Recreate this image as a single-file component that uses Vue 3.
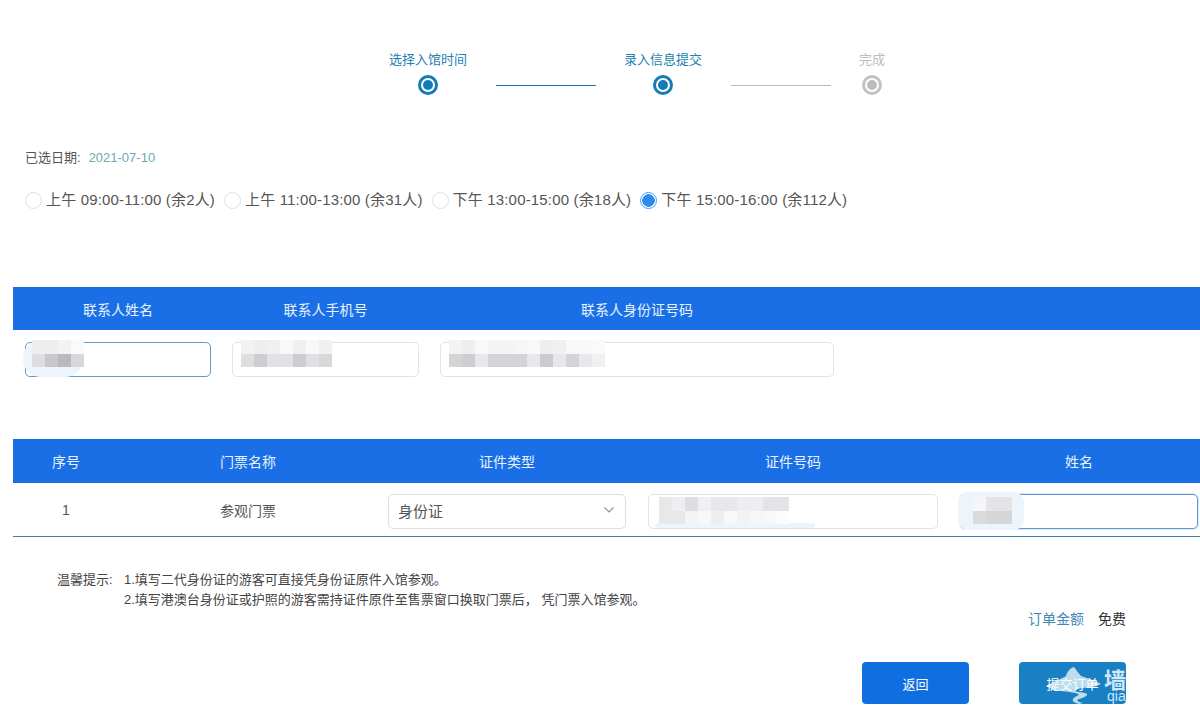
<script setup>
const steps = [
  { label: '选择入馆时间', state: 'on' },
  { label: '录入信息提交', state: 'on' },
  { label: '完成', state: 'off' },
]
const slots = [
  { text: '上午 09:00-11:00 (余2人)', checked: false },
  { text: '上午 11:00-13:00 (余31人)', checked: false },
  { text: '下午 13:00-15:00 (余18人)', checked: false },
  { text: '下午 15:00-16:00 (余112人)', checked: true },
]
const tone = (v) => `rgb(${v},${v},${v + 3})`
const mosaics = {
  name: [[238, 238, 243, 250], [222, 200, 186, 216]],
  phone: [[242, 238, 240, 248, 240, 248, 240], [222, 206, 226, 226, 205, 224, 216]],
  id: [[243, 238, 248, 244, 244, 246, 248, 238, 240, 248, 248, 250], [212, 206, 232, 212, 212, 212, 232, 204, 232, 212, 232, 240]],
  cert: [[232, 238, 222, 240, 232, 232, 238, 238, 228, 228], [232, 232, 244, 248, 238, 248, 242, 246, 248, 252]],
  person: [[246, 228, 228], [218, 214, 214]],
}
</script>

<template>
  <div class="page">
    <div class="steps">
      <template v-for="(s, i) in steps" :key="s.label">
        <div class="step" :class="s.state">
          <span class="step-label">{{ s.label }}</span>
          <span class="dot"><i></i></span>
        </div>
        <span v-if="i < 2" class="step-line" :class="i === 0 ? 'on' : 'off'"></span>
      </template>
    </div>

    <div class="date"><span>已选日期:</span><span class="date-val">2021-07-10</span></div>

    <div class="slots">
      <label v-for="s in slots" :key="s.text" class="slot">
        <span class="radio" :class="{ checked: s.checked }"></span>
        <span>{{ s.text }}</span>
      </label>
    </div>

    <section class="contact">
      <div class="band band-a">
        <span class="c1">联系人姓名</span>
        <span class="c2">联系人手机号</span>
        <span class="c3">联系人身份证号码</span>
      </div>
      <div class="contact-row">
        <div class="field c1 focus-line">
          <div class="smear s-name"></div>
          <div class="mosaic m-name">
            <div v-for="(row, r) in mosaics.name" :key="r" class="m-row">
              <b v-for="(v, k) in row" :key="k" :style="{ background: tone(v) }"></b>
            </div>
          </div>
        </div>
        <div class="field c2">
          <div class="mosaic">
            <div v-for="(row, r) in mosaics.phone" :key="r" class="m-row">
              <b v-for="(v, k) in row" :key="k" :style="{ background: tone(v) }"></b>
            </div>
          </div>
        </div>
        <div class="field c3">
          <div class="mosaic">
            <div v-for="(row, r) in mosaics.id" :key="r" class="m-row">
              <b v-for="(v, k) in row" :key="k" :style="{ background: tone(v) }"></b>
            </div>
          </div>
        </div>
      </div>
    </section>

    <section class="tickets">
      <div class="band band-b grid">
        <span>序号</span><span>门票名称</span><span>证件类型</span><span>证件号码</span><span>姓名</span>
      </div>
      <div class="ticket-row grid">
        <span>1</span>
        <span>参观门票</span>
        <div class="cell">
          <div class="select">
            <span>身份证</span>
            <svg width="12" height="8" viewBox="0 0 12 8"><path d="M1.5 1.5 6 6l4.5-4.5" fill="none" stroke="#8a8f96" stroke-width="1.1" /></svg>
          </div>
        </div>
        <div class="cell">
          <div class="field wide">
            <div class="smear s-cert"></div>
            <div class="mosaic m-cert">
              <div v-for="(row, r) in mosaics.cert" :key="r" class="m-row">
                <b v-for="(v, k) in row" :key="k" :style="{ background: tone(v) }"></b>
              </div>
            </div>
          </div>
        </div>
        <div class="cell">
          <div class="field wide focused">
            <div class="smear s-person"></div>
            <div class="mosaic m-person">
              <div v-for="(row, r) in mosaics.person" :key="r" class="m-row">
                <b v-for="(v, k) in row" :key="k" :style="{ background: tone(v) }"></b>
              </div>
            </div>
          </div>
        </div>
      </div>
    </section>

    <div class="notes">
      <span class="notes-title">温馨提示:</span>
      <div class="notes-body">
        <p>1.填写二代身份证的游客可直接凭身份证原件入馆参观。</p>
        <p>2.填写港澳台身份证或护照的游客需持证件原件至售票窗口换取门票后&#65292; 凭门票入馆参观。</p>
      </div>
    </div>

    <div class="amount"><span class="amount-label">订单金额</span><span>免费</span></div>

    <div class="actions">
      <button class="btn back">返回</button>
      <button class="btn submit">
        <svg class="mark" width="107" height="42" viewBox="0 0 107 42">
          <path d="M27 24C34 20 42 17 47 14 48 10 51 6 55 5 58 9 60 12 62 14 70 17 78 19 82 22 74 26 66 25 58 27 54 29 58 30 66 31 70 32 68 35 60 37 57 38 58 40 64 41L60 42C52 40 52 37 58 34 62 32 58 31 50 30 42 29 33 28 27 24Z" fill="#bcdcf0" />
          <text x="85" y="26" class="mark-han">墙</text>
          <text x="88" y="39" class="mark-lat">qia</text>
        </svg>
        <span class="btn-text">提交订单</span>
      </button>
    </div>
  </div>
</template>

<style>
html, body { margin: 0; background: #fff; }
</style>

<style scoped>
.page {
  width: 1200px;
  height: 709px;
  overflow: hidden;
  box-sizing: border-box;
  padding-top: 51px;
  font-family: "Liberation Sans", "Noto Sans CJK SC", sans-serif;
  color: #555;
  background: #fff;
}
.steps {
  display: flex;
  justify-content: flex-start;
  gap: 28px;
  padding-left: 388px;
  height: 46px;
}
.step {
  display: flex;
  flex-direction: column;
  align-items: center;
  gap: 7px;
  font-size: 13px;
  line-height: 17px;
}
.step.on { color: #217fb1; width: 80px; }
.step.off { color: #bdbdbd; }
.dot {
  width: 20px;
  height: 20px;
  box-sizing: border-box;
  border: 3px solid #137cb7;
  border-radius: 50%;
  display: flex;
  align-items: center;
  justify-content: center;
}
.dot i { width: 10px; height: 10px; border-radius: 50%; background: #137cb7; }
.off .dot { border-color: #c2c2c2; }
.off .dot i { background: #bdbdbd; }
.step-line { width: 100px; height: 1px; margin-top: 34px; }
.step-line.on { background: #137cb7; margin-right: -1px; }
.step-line.off { background: #b9b9b9; }
.date {
  margin: 53px 0 0 25px;
  display: flex;
  gap: 8px;
  font-size: 13px;
  line-height: 16px;
  color: #555;
}
.date-val { color: #6fa8b4; }
.slots {
  display: flex;
  gap: 9px;
  margin: 24px 0 0 25px;
  font-size: 15px;
  line-height: 20px;
  color: #555;
  letter-spacing: 0.17px;
}
.slot { display: flex; align-items: center; gap: 4px; white-space: nowrap; }
.radio {
  width: 17px;
  height: 17px;
  box-sizing: border-box;
  border: 1px solid #dcdfe6;
  border-radius: 50%;
  background: #fff;
}
.radio.checked {
  border-color: #409eff;
  background: radial-gradient(circle, #2d8ceb 0 6px, #fff 6.5px);
}
.contact { margin: 77px 0 0 13px; }
.band {
  background: #1a6fe6;
  color: #e8f3ff;
  font-size: 14px;
  display: flex;
  align-items: center;
}
.band-a { height: 43px; }
.band-a span { text-align: center; }
.c1 { margin-left: 12px; width: 186px; box-sizing: border-box; }
.c2 { margin-left: 21px; width: 187px; box-sizing: border-box; }
.c3 { margin-left: 21px; width: 394px; box-sizing: border-box; }
.contact-row { display: flex; padding-top: 12px; }
.field {
  position: relative;
  height: 35px;
  box-sizing: border-box;
  border: 1px solid #e0e3e8;
  border-radius: 5px;
  background: #fff;
}
.field.focus-line { border-color: #5f9bc6; }
.field.wide { width: 100%; }
.field.focused { border-color: #5e9ad0; box-shadow: 0 0 0 1px #d9e9f8; }
.mosaic { position: absolute; left: 8px; top: -3px; }
.m-row { display: flex; }
.m-row b { display: block; width: 13px; height: 13.5px; }
.m-name { left: 6px; }
.m-cert { left: 10px; top: 2px; }
.m-person { left: 12px; top: 2px; }
.smear {
  position: absolute;
  background: #eef4fb;
  border-radius: 18px;
}
.s-name { left: -3px; top: -3px; width: 60px; height: 37px; }
.s-cert { left: 6px; top: 28px; width: 160px; height: 5px; border-radius: 3px; }
.s-person { left: -3px; top: -3px; width: 66px; height: 38px; background: #eef4fb; border-radius: 10px; }
.tickets { margin-top: 62px; margin-left: 13px; }
.grid {
  display: grid;
  grid-template-columns: 106px 258px 260px 312px 260px;
  align-items: center;
  text-align: center;
  width: 1196px;
}
.band-b { height: 44px; font-size: 14px; }
.ticket-row {
  height: 53px;
  width: 1187px;
  overflow: hidden;
  border-bottom: 1px solid #3e81b8;
  box-sizing: content-box;
  font-size: 14px;
  color: #555;
}
.cell { padding: 4px 11px 0; }
.select {
  height: 35px;
  box-sizing: border-box;
  border: 1px solid #dcdfe6;
  border-radius: 5px;
  display: flex;
  align-items: center;
  justify-content: space-between;
  padding: 0 10px 3px 9px;
  font-size: 15px;
  color: #555;
  background: #fff;
}
.notes {
  display: flex;
  margin: 33px 0 0 57px;
  font-size: 13px;
  line-height: 20px;
  color: #444;
}
.notes-title { width: 67px; }
.notes p { margin: 0; }
.amount {
  display: flex;
  justify-content: flex-end;
  gap: 14px;
  padding-right: 74px;
  margin-top: -1px;
  font-size: 14px;
  line-height: 20px;
  color: #333;
}
.amount-label { color: #3f8ab5; }
.actions {
  display: flex;
  justify-content: flex-end;
  gap: 50px;
  padding-right: 74px;
  margin-top: 33px;
}
.btn {
  position: relative;
  width: 107px;
  height: 42px;
  border: 0;
  border-radius: 4px;
  color: #fff;
  font: 13px "Liberation Sans", "Noto Sans CJK SC", sans-serif;
  overflow: hidden;
  padding: 0;
}
.back { background: #0f6fe0; }
.submit { background: #1a80c4; }
.btn-text { position: relative; }
.mark { position: absolute; left: 0; top: 0; }
.mark-han { font: 700 22px "Noto Sans CJK SC", sans-serif; fill: #cfe7f7; }
.mark-lat { font: 14px "Liberation Sans", sans-serif; fill: #cfe7f7; }
</style>
